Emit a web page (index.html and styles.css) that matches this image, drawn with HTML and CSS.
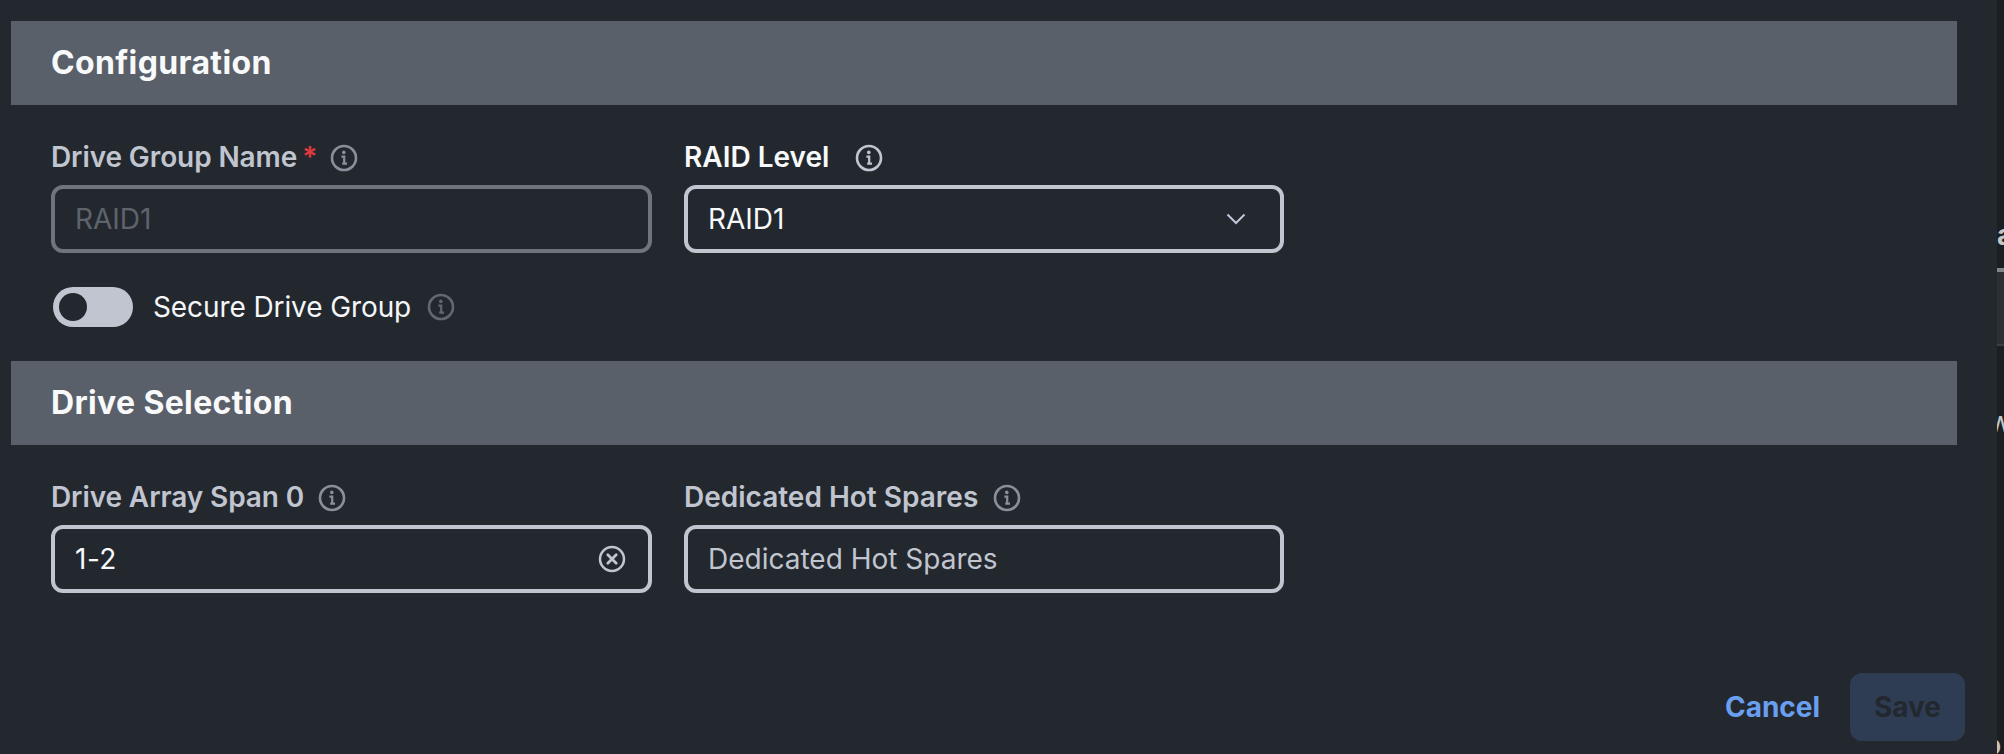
FILE: index.html
```
<!DOCTYPE html>
<html lang="en">
<head>
    <meta charset="UTF-8">
    <meta name="viewport" content="width=device-width, initial-scale=1.0">
    <title>Drive Group</title>
    <link rel="stylesheet" href="styles.css">
</head>
<body>
    <svg class="sprite">
        <symbol id="info" viewBox="0 0 28 28">
            <circle cx="14" cy="14" r="12" fill="none" stroke="currentColor" stroke-width="2.6"/>
            <circle cx="13.8" cy="8.4" r="1.8" fill="currentColor"/>
            <path d="M11.4 12.6H14.2V19.4M12.2 19.6H17" fill="none" stroke="currentColor" stroke-width="2.2"/>
        </symbol>
    </svg>

    <form class="panel">
        <h2 class="section-title">Configuration</h2>
        <div class="fields">
            <div class="field">
                <div class="label label-name">
                    <label for="name">Drive Group Name</label><span class="required">*</span>
                    <svg class="info"><use href="#info"/></svg>
                </div>
                <div class="control disabled"><input id="name" placeholder="RAID1" disabled></div>
            </div>
            <div class="field">
                <div class="label label-strong">
                    <label for="level">RAID Level</label>
                    <svg class="info"><use href="#info"/></svg>
                </div>
                <div class="control select">
                    <input id="level" value="RAID1" readonly>
                    <svg class="chevron" viewBox="0 0 20 12"><path d="M1.5 1.5L10 10L18.5 1.5" fill="none" stroke="currentColor" stroke-width="2"/></svg>
                </div>
            </div>
        </div>
        <div class="switch-row">
            <span class="switch"></span>
            <span class="switch-label">Secure Drive Group</span>
            <svg class="info"><use href="#info"/></svg>
        </div>

        <h2 class="section-title">Drive Selection</h2>
        <div class="fields">
            <div class="field">
                <div class="label label-span">
                    <label for="span">Drive Array Span 0</label>
                    <svg class="info"><use href="#info"/></svg>
                </div>
                <div class="control">
                    <input id="span" value="1-2">
                    <svg class="clear" viewBox="0 0 28 28">
                        <circle cx="14" cy="14" r="12" fill="none" stroke="currentColor" stroke-width="2.5"/>
                        <path d="M9.8 9.8L18.2 18.2M18.2 9.8L9.8 18.2" fill="none" stroke="currentColor" stroke-width="2.8" stroke-linecap="round"/>
                    </svg>
                </div>
            </div>
            <div class="field">
                <div class="label label-spares">
                    <label for="spares">Dedicated Hot Spares</label>
                    <svg class="info"><use href="#info"/></svg>
                </div>
                <div class="control"><input id="spares" placeholder="Dedicated Hot Spares"></div>
            </div>
        </div>

        <div class="actions">
            <button type="button" class="cancel">Cancel</button>
            <button type="button" class="save" disabled>Save</button>
        </div>
    </form>

    <!-- edge of the page behind the panel -->
    <div class="behind">
        <div class="behind-head">a</div>
        <div class="behind-row"></div>
        <div class="behind-text">w</div>
        <div class="behind-foot">o</div>
    </div>
</body>
</html>
```

FILE: styles.css
```
* { box-sizing: border-box; }
body { margin: 0; height: 754px; display: flex; overflow: hidden; background: #23282f; font-family: Inter, "Liberation Sans", sans-serif; font-size: 28px; color: #f5f6f8; }
.sprite { display: none; }
.panel { width: 1997px; padding: 21px 0 0 11px; }

.section-title { width: 1946px; height: 84px; margin: 0; padding-left: 40px; line-height: 84px; font-size: 32px; font-weight: 700; letter-spacing: 0.35px; background: #5a6069; color: #f8f9fa; }
.fields { display: flex; gap: 32px; padding: 35px 0 0 40px; }
.field { width: 601px; }
.field + .field { width: 600px; }
.label { display: flex; align-items: center; height: 34px; margin-bottom: 11px; font-weight: 600; color: #c1c5cf; }
.label-strong { color: #f8f9fa; }
.label-name, .label-span { letter-spacing: -0.1px; }
.required { width: 14px; margin-left: 5px; color: #e0383f; }
.info { width: 28px; height: 28px; margin-left: 14px; margin-top: 2px; color: #8b8f99; }
.label-strong .info { margin-left: 26px; color: #c1c5cf; }
.label-spares .info { margin-left: 15px; }

.control { display: flex; align-items: center; height: 68px; padding: 0 22px 0 20px; border: 4px solid #c1c5cf; border-radius: 12px; }
.control input { flex: 1; min-width: 0; padding: 0; border: none; outline: none; background: none; font: inherit; color: #f8f9fa; }
.control input::placeholder { color: #c1c5cf; opacity: 1; }
#span { letter-spacing: 0.5px; }
.disabled { border-color: #70747f; }
.disabled input::placeholder { color: #5f636c; }
.chevron { width: 20px; height: 12px; margin-right: 12px; color: #c1c5dc; }
.clear { width: 28px; height: 28px; color: #c1c5cf; }

.switch-row { display: flex; align-items: center; height: 108px; padding: 0 0 0 42px; }
.switch { width: 80px; height: 40px; padding: 6px; border-radius: 20px; background: #c1c5cf; }
.switch::before { content: ""; display: block; width: 28px; height: 28px; border-radius: 50%; background: #23282f; }
.switch-label { margin-left: 20px; letter-spacing: -0.1px; }
.switch-row .info { margin-left: 16px; margin-top: 0; color: #63676f; }

.actions { display: flex; justify-content: flex-end; gap: 8px; padding: 80px 32px 0 0; }
.actions button { height: 68px; padding: 0; border: none; border-radius: 12px; background: none; font: inherit; font-weight: 700; }
.actions .cancel { width: 139px; color: #6a9ff0; }
.actions .save { width: 115px; background: #2f3d54; color: #23282f; }

.behind { width: 7px; overflow: hidden; padding-top: 218px; background: #1b1f23; color: #c4c5c7; line-height: 34px; white-space: nowrap; }
.behind-head { height: 50px; font-weight: 700; }
.behind-row { height: 78px; border-top: 4px solid #80848b; border-bottom: 2px solid #3a3e46; background: #2c2f34; }
.behind-text { height: 58px; margin-top: 59px; margin-left: -8px; }
.behind-foot { margin-top: 265px; margin-left: -13px; font-weight: 700; }
```
